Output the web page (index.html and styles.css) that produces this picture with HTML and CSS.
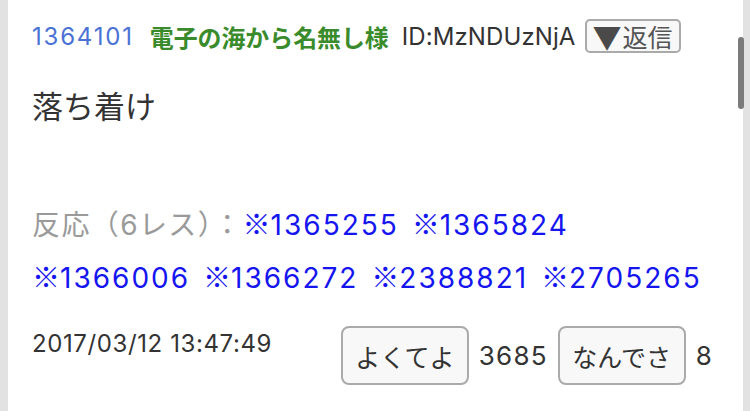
FILE: index.html
```html
<!DOCTYPE html>
<html lang="ja">
<head>
<meta charset="utf-8">
<link rel="stylesheet" href="styles.css">
</head>
<body>
<div class="page">
  <div class="edge-left"></div>
  <main class="post">
    <div class="post-head">
      <span class="post-no">1364101</span>
      <span class="post-name">電子の海から名無し様</span>
      <span class="post-id">ID:MzNDUzNjA</span>
      <span class="reply-btn"><span class="tri">▼</span>返信</span>
    </div>
    <div class="post-body">落ち着け</div>
    <div class="reactions">
      <span class="react-label">反応（<span class="num">6</span>レス）：</span><a class="ref"><span class="kome">※</span>1365255</a> <a class="ref"><span class="kome">※</span>1365824</a> <a class="ref"><span class="kome">※</span>1366006</a> <a class="ref"><span class="kome">※</span>1366272</a> <a class="ref"><span class="kome">※</span>2388821</a> <a class="ref"><span class="kome">※</span>2705265</a>
    </div>
    <div class="post-foot">
      <span class="post-date">2017/03/12 13:47:49</span>
      <div class="votes">
        <span class="vote-btn">よくてよ</span>
        <span class="vote-count">3685</span>
        <span class="vote-btn">なんでさ</span>
        <span class="vote-count">8</span>
      </div>
    </div>
  </main>
  <div class="edge-right"></div>
  <div class="scroll-thumb"></div>
</div>
</body>
</html>
```
FILE: styles.css
```css
html, body {
  margin: 0;
  padding: 0;
  background: #fff;
}
body {
  font-family: Inter, "Noto Sans CJK JP", sans-serif;
  color: #333;
}
.page {
  position: relative;
  display: flex;
  width: 750px;
  height: 411px;
  overflow: hidden;
}
.edge-left {
  width: 8px;
  background: #e2e2e2;
  flex: none;
}
.edge-right {
  width: 7px;
  background: #e2e2e2;
  flex: none;
}
.scroll-thumb {
  position: absolute;
  left: 738px;
  top: 37px;
  width: 6px;
  height: 72px;
  border-radius: 3px;
  background: #7b7b7b;
}
.post {
  flex: 1;
  padding: 19px 30px 0 24px;
}
.post-head {
  display: flex;
  align-items: center;
  height: 34px;
  font-size: 24px;
}
.post-no {
  color: #4a72d4;
  letter-spacing: 1.8px;
  margin-right: 16px;
}
.post-name {
  color: #3a8b2b;
  font-weight: bold;
  font-size: 23.9px;
  margin-right: 13px;
}
.post-id {
  color: #333;
  letter-spacing: 0.1px;
  margin-right: 9px;
}
.reply-btn {
  box-sizing: border-box;
  height: 34px;
  width: 96px;
  border: 2px solid #aaa;
  border-radius: 5px;
  background: #f8f8f8;
  color: #555;
  display: flex;
  align-items: center;
  justify-content: center;
  font-family: "Noto Sans CJK JP", sans-serif;
  font-size: 25px;
  line-height: 1;
}
.tri {
  font-size: 29px;
  margin-right: 1px;
  color: #4a4a4a;
}
.post-body {
  font-size: 31px;
  margin-top: 38px;
  line-height: 1;
}
.reactions {
  margin-top: 76px;
  font-size: 28px;
  line-height: 51px;
  word-spacing: 5px;
}
.react-label {
  color: #9a9a9a;
  font-family: "Noto Sans CJK JP", sans-serif;
  letter-spacing: 1.4px;
}
.num {
  font-family: Inter, sans-serif;
}
.ref {
  color: #1515f0;
  text-decoration: none;
  letter-spacing: 2px;
}
.kome {
  font-family: "Noto Sans CJK JP", sans-serif;
  letter-spacing: 0;
}
.post-foot {
  display: flex;
  justify-content: space-between;
  align-items: flex-start;
  margin-top: 22px;
}
.post-date {
  font-size: 24px;
  letter-spacing: 0.6px;
  margin-top: 3px;
}
.votes {
  display: flex;
  align-items: center;
  gap: 10px;
}
.vote-btn {
  box-sizing: border-box;
  height: 59px;
  width: 128px;
  border: 2px solid #aaa;
  border-radius: 8px;
  background: #f8f8f8;
  display: flex;
  align-items: center;
  justify-content: center;
  font-family: "Noto Sans CJK JP", sans-serif;
  font-size: 25px;
}
.vote-count {
  font-size: 26px;
  letter-spacing: 1.2px;
}
```
